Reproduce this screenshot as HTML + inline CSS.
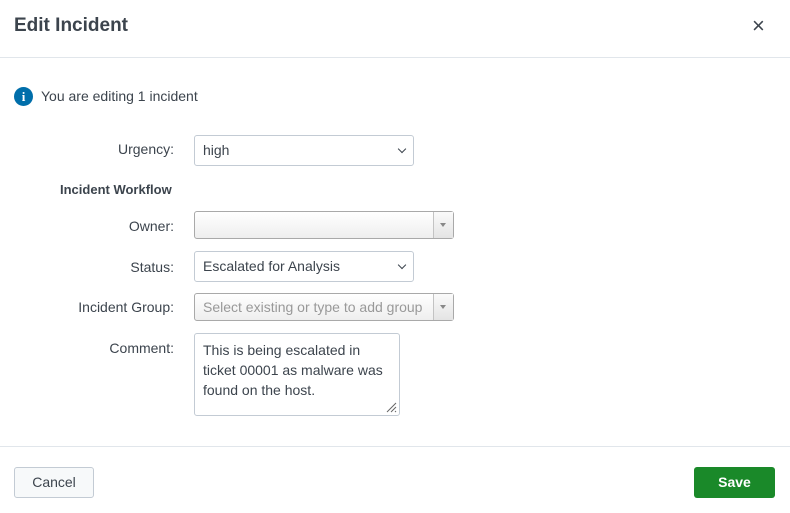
<!DOCTYPE html><html><head><style>
body{margin:0;width:790px;height:513px;background:#fff;font-family:"Liberation Sans",sans-serif;color:#3c444d;position:relative;overflow:hidden}
.a{position:absolute}
.lbl{position:absolute;right:616px;font-size:14px;color:#3c444d}
.sel{position:absolute;left:194px;border:1px solid #c3cbd4;border-radius:3px;box-sizing:border-box;font-size:14px;padding-left:8px;background:#fff}
.combo{position:absolute;left:194px;width:260px;height:28px;border:1px solid #a9a9a9;border-radius:3px;box-sizing:border-box;background:linear-gradient(#fff,#eeeeee);font-size:14px}
.combo .arr{position:absolute;right:0;top:0;bottom:0;width:19px;border-left:1px solid #c3c3c3;background:linear-gradient(#fafafa,#e4e4e4)}
.combo .arr:after{content:"";position:absolute;left:6px;top:11px;border:3px solid transparent;border-top:4px solid #888}
.chev{position:absolute;right:8px;top:10px;width:5px;height:5px;border-right:1.5px solid #3c444d;border-bottom:1.5px solid #3c444d;transform:rotate(45deg)}
</style></head><body>
<div class="a" style="left:14px;top:15px;font-size:19px;font-weight:bold;color:#3c444d">Edit Incident</div>
<div class="a" style="left:752px;top:13px;font-size:22px;color:#3c444d">×</div>
<div class="a" style="left:0;top:57px;width:790px;height:1px;background:#e1e6eb"></div>
<div class="a" style="left:14px;top:87px;width:19px;height:19px;border-radius:50%;background:#006eaa;color:#fff;font-size:13px;font-weight:bold;text-align:center;line-height:19px;font-family:'Liberation Serif',serif">i</div>
<div class="a" style="left:41px;top:88px;font-size:14px">You are editing 1 incident</div>
<div class="lbl" style="top:141px">Urgency:</div>
<div class="sel" style="top:135px;width:220px;height:31px;line-height:29px">high<div class="chev"></div></div>
<div class="a" style="left:60px;top:182px;font-size:13px;font-weight:bold">Incident Workflow</div>
<div class="lbl" style="top:218px">Owner:</div>
<div class="combo" style="top:211px"><div class="arr"></div></div>
<div class="lbl" style="top:259px">Status:</div>
<div class="sel" style="top:251px;width:220px;height:31px;line-height:29px">Escalated for Analysis<div class="chev"></div></div>
<div class="lbl" style="top:299px">Incident Group:</div>
<div class="combo" style="top:293px"><span style="position:absolute;left:8px;top:5px;color:#999">Select existing or type to add group</span><div class="arr"></div></div>
<div class="lbl" style="top:340px">Comment:</div>
<div class="sel" style="top:333px;width:206px;height:83px;padding-top:6px;line-height:20px;font-size:14px">This is being escalated in<br>ticket 00001 as malware was<br>found on the host.
<svg class="a" style="right:2px;bottom:2px" width="12" height="12"><path d="M11 2L2 11M11 6L6 11M11 10L10 11" stroke="#666" stroke-width="1"/></svg></div>
<div class="a" style="left:0;top:446px;width:790px;height:1px;background:#e1e6eb"></div>
<div class="a" style="left:14px;top:467px;width:80px;height:31px;box-sizing:border-box;border:1px solid #c3cbd4;border-radius:3px;background:#f7f9fa;font-size:14px;text-align:center;line-height:29px">Cancel</div>
<div class="a" style="left:694px;top:467px;width:81px;height:31px;border-radius:3px;background:#1a8929;color:#fff;font-size:14px;font-weight:bold;text-align:center;line-height:31px">Save</div>
</body></html>
